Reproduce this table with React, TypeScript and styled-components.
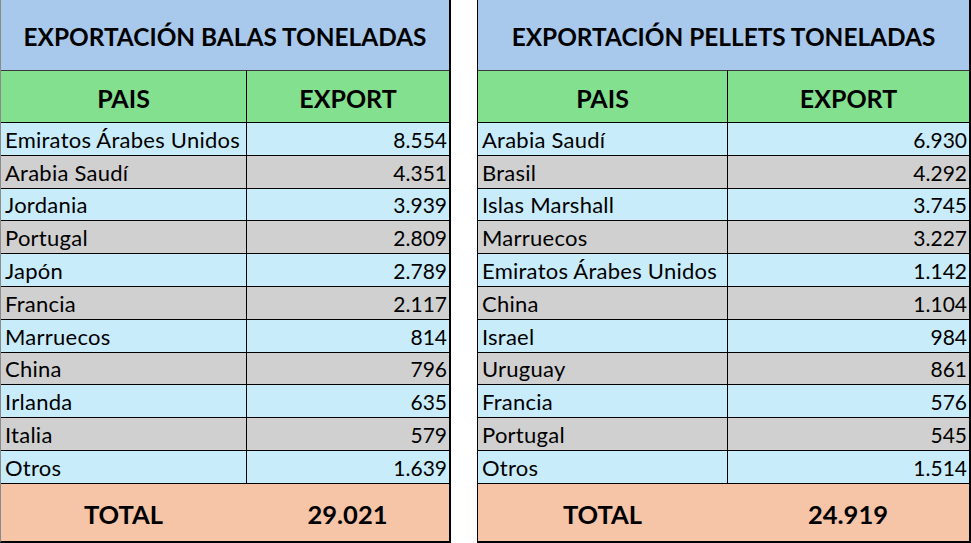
import React from "react";
import styled, { createGlobalStyle } from "styled-components";

const GlobalStyle = createGlobalStyle`
  html, body {
    margin: 0;
    padding: 0;
    background: #ffffff;
  }
  body {
    font-family: Lato, "Noto Sans", sans-serif;
    color: #000000;
  }
`;

const Page = styled.div`
  display: flex;
  gap: 26px;
  width: 971px;
  height: 543px;
  overflow: hidden;
`;

const Sheet = styled.div<{ $cols: string; $edge: string }>`
  display: grid;
  grid-template-columns: ${(p) => p.$cols};
  grid-template-rows: 70px 52px repeat(11, 32.8px) 58px;
  border-left: 1px solid ${(p) => p.$edge};
  border-right: 2px solid #000000;
  border-bottom: 2px solid #000000;
  height: 541px;
  box-sizing: content-box;
`;

const TitleCell = styled.div`
  grid-column: 1 / span 2;
  background: #a8c8ec;
  display: flex;
  align-items: center;
  justify-content: center;
  font-weight: 700;
  font-size: 24.4px;
  padding-top: 2px;
  box-sizing: border-box;
  white-space: nowrap;
`;

const HeadCell = styled.div<{ $first?: boolean }>`
  background: #83e08e;
  border-top: 1px solid #3a3a3a;
  border-left: ${(p) => (p.$first ? "none" : "1px solid #000000")};
  display: flex;
  align-items: center;
  justify-content: center;
  font-weight: 700;
  font-size: 25px;
  padding-top: 3px;
  box-sizing: border-box;
`;

const DataCell = styled.div<{ $alt: boolean; $num?: boolean }>`
  background: ${(p) => (p.$alt ? "#d0d0d0" : "#c9ecfb")};
  border-top: 1px solid #000000;
  border-left: ${(p) => (p.$num ? "1px solid #000000" : "none")};
  display: flex;
  align-items: center;
  justify-content: ${(p) => (p.$num ? "flex-end" : "flex-start")};
  padding: 1px ${(p) => (p.$num ? "2px" : "0")} 0 ${(p) => (p.$num ? "0" : "4px")};
  font-size: ${(p) => (p.$num ? "21px" : "22px")};
  letter-spacing: ${(p) => (p.$num ? "0" : "0.25px")};
  white-space: nowrap;
  box-sizing: border-box;
`;

const TotalCell = styled.div`
  background: #f6c5a8;
  border-top: 1px solid #000000;
  display: flex;
  align-items: center;
  justify-content: center;
  font-weight: 700;
  font-size: 25.5px;
  padding-top: 4px;
  box-sizing: border-box;
`;

type Row = [string, string];

const balas: Row[] = [
  ["Emiratos Árabes Unidos", "8.554"],
  ["Arabia Saudí", "4.351"],
  ["Jordania", "3.939"],
  ["Portugal", "2.809"],
  ["Japón", "2.789"],
  ["Francia", "2.117"],
  ["Marruecos", "814"],
  ["China", "796"],
  ["Irlanda", "635"],
  ["Italia", "579"],
  ["Otros", "1.639"],
];

const pellets: Row[] = [
  ["Arabia Saudí", "6.930"],
  ["Brasil", "4.292"],
  ["Islas Marshall", "3.745"],
  ["Marruecos", "3.227"],
  ["Emiratos Árabes Unidos", "1.142"],
  ["China", "1.104"],
  ["Israel", "984"],
  ["Uruguay", "861"],
  ["Francia", "576"],
  ["Portugal", "545"],
  ["Otros", "1.514"],
];

interface ExportTableProps {
  title: string;
  rows: Row[];
  total: string;
  cols: string;
  edge: string;
}

const ExportTable: React.FC<ExportTableProps> = ({
  title,
  rows,
  total,
  cols,
  edge,
}) => (
  <Sheet $cols={cols} $edge={edge}>
    <TitleCell>{title}</TitleCell>
    <HeadCell $first>PAIS</HeadCell>
    <HeadCell>EXPORT</HeadCell>
    {rows.map(([pais, value], i) => (
      <React.Fragment key={pais}>
        <DataCell $alt={i % 2 === 1}>{pais}</DataCell>
        <DataCell $alt={i % 2 === 1} $num>
          {value}
        </DataCell>
      </React.Fragment>
    ))}
    <TotalCell>TOTAL</TotalCell>
    <TotalCell>{total}</TotalCell>
  </Sheet>
);

const App: React.FC = () => (
  <>
    <GlobalStyle />
    <Page>
      <ExportTable
        title="EXPORTACIÓN BALAS TONELADAS"
        rows={balas}
        total="29.021"
        cols="245px 203px"
        edge="#8a8a8a"
      />
      <ExportTable
        title="EXPORTACIÓN PELLETS TONELADAS"
        rows={pellets}
        total="24.919"
        cols="249px 242px"
        edge="#000000"
      />
    </Page>
  </>
);

export default App;
